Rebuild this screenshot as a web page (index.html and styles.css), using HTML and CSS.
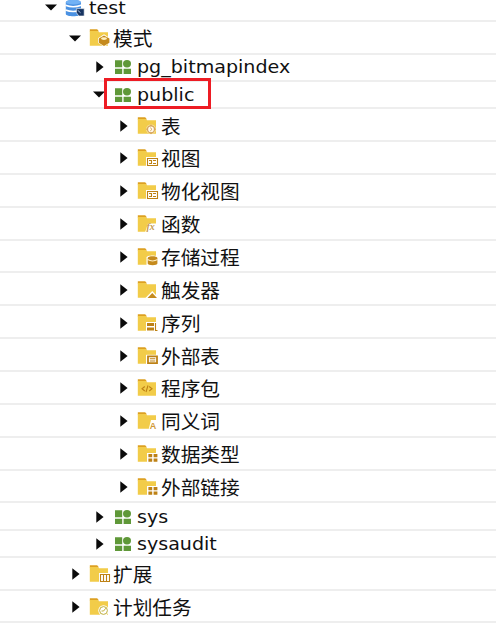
FILE: index.html
```
<!DOCTYPE html>
<html lang="zh-CN">
<head>
    <meta charset="UTF-8">
    <meta name="viewport" content="width=device-width, initial-scale=1.0">
    <title>test</title>
    <link rel="stylesheet" href="styles.css">
</head>
<body>
    <svg class="defs">
        <symbol id="right" viewBox="0 0 8 12"><path d="M.3 .3L7.6 6L.3 11.7z" fill="#0a0a0a"/></symbol>
        <symbol id="down" viewBox="0 0 12 7"><path d="M0 .4H12L6 6.6z" fill="#0a0a0a"/></symbol>
        <symbol id="folder" viewBox="0 0 22 20">
            <path d="M.8 1.2H8.2L10 3.6H.8z" fill="#dda022"/>
            <path d="M.8 3H8.6L10 4.2H19V17.8H.8z" fill="#f2cc49"/>
        </symbol>
        <symbol id="schema" viewBox="0 0 22 20">
            <path d="M2 3.2H9.2V10.2H2zM2 11.8H9.2V17H2zM10.6 11.8H18V17H10.6z" fill="#5f9838"/>
            <ellipse cx="14" cy="6.7" rx="4" ry="3.7" fill="#5f9838"/>
        </symbol>
    </svg>

    <div class="tree">
        <div class="row root level-0">
            <svg class="arrow down"><use href="#down"/></svg>
            <svg class="icon" viewBox="0 0 22 20">
                <path d="M.8 4.6C.8 1 16 1 16 4.6V16C16 19 .8 19 .8 16z" fill="#4a91e2"/>
                <ellipse cx="8.4" cy="4.2" rx="7.4" ry="2.3" fill="#72b2f5"/>
                <path d="M.5 7.2Q8 10.2 16.2 7.2M.5 12Q8 15 16.2 12" fill="none" stroke="#fff" stroke-width="1.5"/>
                <path d="M11.4 10.6H19.2V18H13.8L11.4 14.6z" fill="#173461" stroke="#fff" stroke-width=".6"/>
                <path d="M12.6 12.2L15.6 14.8" fill="none" stroke="#b8cce5" stroke-width=".9"/>
            </svg>
            <span class="latin">test</span>
        </div>
        <div class="row level-1">
            <svg class="arrow down"><use href="#down"/></svg>
            <svg class="icon" viewBox="0 0 22 20">
                <use href="#folder"/>
                <path d="M9 10.2L15 6.2L21 10.2V14.8L15 18.8L9 14.8z" fill="#fff"/>
                <path d="M9.8 10.6L15 7.6L20.4 10.6V14.8L15 18L9.8 14.8z" fill="#c58a1d"/>
                <ellipse cx="15" cy="10.6" rx="3" ry="1.4" fill="#fff0bd"/>
            </svg>
            <span>模式</span>
        </div>
        <div class="row small level-2">
            <svg class="arrow"><use href="#right"/></svg>
            <svg class="icon"><use href="#schema"/></svg>
            <span class="latin">pg_bitmapindex</span>
        </div>
        <div class="row small level-2 marked">
            <svg class="arrow down"><use href="#down"/></svg>
            <svg class="icon"><use href="#schema"/></svg>
            <span class="latin">public</span>
        </div>
        <div class="row level-3">
            <svg class="arrow"><use href="#right"/></svg>
            <svg class="icon" viewBox="0 0 22 20">
                <use href="#folder"/>
                <circle cx="14" cy="13.3" r="4.9" fill="#f7e2a0"/>
                <circle cx="14" cy="13.3" r="3.5" fill="#fffaf0" stroke="#d7a75d" stroke-width="1.3"/>
                <path d="M14 8.7V10M14 16.7V18M9.3 13.3H10.7M17.4 13.3H18.7" stroke="#d7a75d" stroke-width="1.6"/>
                <path d="M13.2 11.7L15 13.3L13.2 15" fill="none" stroke="#d7a75d"/>
            </svg>
            <span>表</span>
        </div>
        <div class="row level-3">
            <svg class="arrow"><use href="#right"/></svg>
            <svg class="icon" viewBox="0 0 22 20">
                <use href="#folder"/>
                <path d="M9 9H22V19H9z" fill="#fff"/>
                <path d="M10.5 10.5H20.5V17.5H10.5zM12 12.5H15M12 15.5H15M14.5 12.5V15.5M16 12.5H19M16 15.5H19" class="line"/>
            </svg>
            <span>视图</span>
        </div>
        <div class="row level-3">
            <svg class="arrow"><use href="#right"/></svg>
            <svg class="icon" viewBox="0 0 22 20">
                <use href="#folder"/>
                <path d="M9 9H22V19H9z" fill="#fff"/>
                <path d="M10.5 10.5H20.5V17.5H10.5zM12 12.5H15M12 15.5H15M14.5 12.5V15.5M16 12.5H19M16 15.5H19" class="line"/>
            </svg>
            <span>物化视图</span>
        </div>
        <div class="row level-3">
            <svg class="arrow"><use href="#right"/></svg>
            <svg class="icon" viewBox="0 0 22 20">
                <use href="#folder"/>
                <path d="M11 9.5H21V18.5H8z" fill="#fff"/>
                <text x="9.4" y="16.4" class="fx">fx</text>
            </svg>
            <span>函数</span>
        </div>
        <div class="row level-3">
            <svg class="arrow"><use href="#right"/></svg>
            <svg class="icon" viewBox="0 0 22 20">
                <use href="#folder"/>
                <path d="M9.5 10.5C9.5 7.8 21.5 7.8 21.5 10.5V19H9.5z" fill="#fff"/>
                <path d="M10.7 11C10.7 8.8 20.4 8.8 20.4 11V16.5C20.4 18.7 10.7 18.7 10.7 16.5z" fill="#c58a1d"/>
                <path d="M10.5 12.6Q15.5 15.4 20.6 12.6" fill="none" stroke="#fff2c8" stroke-width="1.1"/>
            </svg>
            <span>存储过程</span>
        </div>
        <div class="row level-3">
            <svg class="arrow"><use href="#right"/></svg>
            <svg class="icon" viewBox="0 0 22 20">
                <use href="#folder"/>
                <path d="M8.2 18.2L15.3 11L22 18.2z" fill="#fff"/>
                <path d="M10.5 18L15.3 13L20 18z" fill="#c58a1d"/>
            </svg>
            <span>触发器</span>
        </div>
        <div class="row level-3">
            <svg class="arrow"><use href="#right"/></svg>
            <svg class="icon" viewBox="0 0 22 20">
                <use href="#folder"/>
                <path d="M9 9H22V19H9z" fill="#fff"/>
                <path d="M10 10H17V13H10zM10 14.5H17V17.5H10z" fill="#bd8115"/>
                <path d="M18.5 10V17.5H20.5" class="line"/>
            </svg>
            <span>序列</span>
        </div>
        <div class="row level-3">
            <svg class="arrow"><use href="#right"/></svg>
            <svg class="icon" viewBox="0 0 22 20">
                <use href="#folder"/>
                <path d="M9 8.8H22V19H9z" fill="#fff"/>
                <path d="M11 10.4H20V17.2H11z" fill="#fff" stroke="#bd8115" stroke-width="1.8"/>
                <path d="M12.8 12.8H18.3M12.8 15H18.3" class="line"/>
            </svg>
            <span>外部表</span>
        </div>
        <div class="row level-3">
            <svg class="arrow"><use href="#right"/></svg>
            <svg class="icon" viewBox="0 0 22 20">
                <use href="#folder"/>
                <path d="M7.8 8.5L5 10.8L7.8 13M12.2 8.5L15 10.8L12.2 13M11 7.5L9 14" class="line"/>
            </svg>
            <span>程序包</span>
        </div>
        <div class="row level-3">
            <svg class="arrow"><use href="#right"/></svg>
            <svg class="icon" viewBox="0 0 22 20">
                <use href="#folder"/>
                <path d="M14 9H19.5L22 19H11.5z" fill="#fff"/>
                <text x="12.8" y="17.6" class="letter">A</text>
            </svg>
            <span>同义词</span>
        </div>
        <div class="row level-3">
            <svg class="arrow"><use href="#right"/></svg>
            <svg class="icon" viewBox="0 0 22 20">
                <use href="#folder"/>
                <path d="M10 9H22V19H10z" fill="#fff"/>
                <path d="M11.4 10H15.2V13.2H11.4zM16.6 10H20.4V13.2H16.6zM11.4 14.6H15.2V17.8H11.4zM16.6 14.6H20.4V17.8H16.6z" fill="#bd8115"/>
            </svg>
            <span>数据类型</span>
        </div>
        <div class="row level-3">
            <svg class="arrow"><use href="#right"/></svg>
            <svg class="icon" viewBox="0 0 22 20">
                <use href="#folder"/>
                <path d="M10 9H22V19H10z" fill="#fff"/>
                <path d="M11.4 10H15.2V13.2H11.4zM16.6 10H20.4V13.2H16.6zM11.4 14.6H15.2V17.8H11.4zM16.6 14.6H20.4V17.8H16.6z" fill="#bd8115"/>
            </svg>
            <span>外部链接</span>
        </div>
        <div class="row small level-2">
            <svg class="arrow"><use href="#right"/></svg>
            <svg class="icon"><use href="#schema"/></svg>
            <span class="latin">sys</span>
        </div>
        <div class="row small level-2">
            <svg class="arrow"><use href="#right"/></svg>
            <svg class="icon"><use href="#schema"/></svg>
            <span class="latin">sysaudit</span>
        </div>
        <div class="row level-1">
            <svg class="arrow"><use href="#right"/></svg>
            <svg class="icon" viewBox="0 0 22 20">
                <use href="#folder"/>
                <path d="M10 9H22V19H10z" fill="#fff"/>
                <path d="M11.5 10.5H20.5V17.5H11.5zM14.5 10.5V17.5M17.5 10.5V17.5" class="line"/>
            </svg>
            <span>扩展</span>
        </div>
        <div class="row level-1">
            <svg class="arrow"><use href="#right"/></svg>
            <svg class="icon" viewBox="0 0 22 20">
                <use href="#folder"/>
                <circle cx="14.5" cy="13.5" r="5.2" fill="#fff"/>
                <circle cx="14.5" cy="13.5" r="3.9" fill="none" stroke="#bfae3a"/>
                <path d="M16.8 11.2L14.6 14H12.5" fill="none" stroke="#bfae3a"/>
            </svg>
            <span>计划任务</span>
        </div>
    </div>
</body>
</html>
```
FILE: styles.css
```
* {
    box-sizing: border-box;
}
body {
    margin: 0;
    background: #fff;
    color: #111;
    font-family: "Noto Sans CJK SC", sans-serif;
    font-size: 19.7px;
    overflow: hidden;
}
.defs {
    position: absolute;
    width: 0;
    height: 0;
}
.row {
    position: relative;
    display: flex;
    align-items: center;
    height: 32.85px;
    padding-top: 2px;
    border-bottom: 2px solid #eeeeee;
    line-height: 28px;
    white-space: nowrap;
}
.row.small {
    height: 27.2px;
    padding-top: 0;
}
.level-3 ~ .row.small {
    padding-top: 2px;
}
.row.root {
    height: 22px;
    padding-top: 0;
    padding-bottom: 5px;
    line-height: 15px;
}
.level-0 {
    padding-left: 48px;
}
.level-1 {
    padding-left: 72px;
}
.level-2 {
    padding-left: 96px;
}
.level-3 {
    padding-left: 120px;
}
.arrow {
    flex: none;
    width: 8px;
    height: 12px;
    margin-right: 9px;
}
.arrow.down {
    width: 12px;
    height: 7px;
    margin-left: -3px;
    margin-right: 8px;
}
.icon {
    flex: none;
    width: 22px;
    height: 20px;
    margin-right: 2px;
}
.latin {
    font-family: "DejaVu Sans", sans-serif;
    font-size: 18px;
    transform: scaleX(1.06);
    transform-origin: left;
}
.line {
    fill: none;
    stroke: #bd8115;
    stroke-width: 1.1;
}
.fx {
    font: italic bold 10px "Liberation Serif", serif;
    fill: #c59a50;
}
.letter {
    font: bold 9px "Liberation Sans", sans-serif;
    fill: #cf9b38;
}
/* red frame around the selected schema */
.marked::after {
    content: "";
    position: absolute;
    left: 104px;
    top: -4px;
    width: 101px;
    height: 25px;
    border: 3px solid #ed1c24;
    z-index: 1;
}
```
